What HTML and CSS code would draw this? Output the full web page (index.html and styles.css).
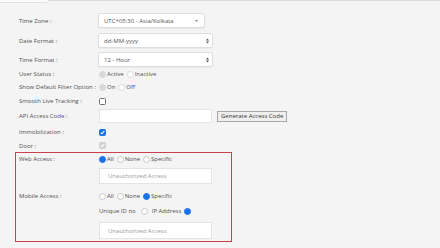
FILE: index.html
```html
<!DOCTYPE html>
<html>
<head>
<meta charset="utf-8">
<link rel="stylesheet" href="styles.css">
</head>
<body>
<div class="topbar"><div class="tab"></div><div class="line"></div></div>
<div class="form">
  <div class="row r-tz">
    <span class="lbl">Time Zone :</span>
    <div class="select tz"><span>UTC+05:30 - Asia/Kolkata</span><svg class="caret" width="3" height="2" viewBox="0 0 3 2"><path d="M0 0H3L1.5 2Z" fill="#888"/></svg></div>
  </div>
  <div class="row r-df">
    <span class="lbl">Date Format :</span>
    <div class="select wide"><span>dd-MM-yyyy</span><svg class="updown" width="3" height="6" viewBox="0 0 3 6"><path d="M0 2.4H3L1.5 0.4Z M0 3.6H3L1.5 5.6Z" fill="#555"/></svg></div>
  </div>
  <div class="row r-tf">
    <span class="lbl">Time Format :</span>
    <div class="select wide"><span>12 - Hour</span><svg class="updown" width="3" height="6" viewBox="0 0 3 6"><path d="M0 2.4H3L1.5 0.4Z M0 3.6H3L1.5 5.6Z" fill="#555"/></svg></div>
  </div>
  <div class="row r-us">
    <span class="lbl">User Status :</span>
    <span class="radio dis-on"></span><span class="opt">Active</span>
    <span class="radio dis"></span><span class="opt">Inactive</span>
  </div>
  <div class="row r-sd">
    <span class="lbl">Show Default Filter Option :</span>
    <span class="radio dis-on"></span><span class="opt">On</span>
    <span class="radio dis"></span><span class="opt">Off</span>
  </div>
  <div class="row r-sm">
    <span class="lbl">Smooth Live Tracking :</span>
    <span class="check"></span>
  </div>
  <div class="row r-api">
    <span class="lbl">API Access Code :</span>
    <div class="input api"></div>
    <button class="btn">Generate Access Code</button>
  </div>
  <div class="row r-im">
    <span class="lbl">Immobilization :</span>
    <span class="check on"><svg width="5" height="5" viewBox="0 0 5 5"><path d="M0.8 2.6L2 3.8L4.3 1" stroke="#fff" stroke-width="1.1" fill="none"/></svg></span>
  </div>
  <div class="row r-door">
    <span class="lbl">Door :</span>
    <span class="check dis-on"><svg width="5" height="5" viewBox="0 0 5 5"><path d="M0.8 2.6L2 3.8L4.3 1" stroke="#fff" stroke-width="1.1" fill="none"/></svg></span>
  </div>
  <div class="access">
    <div class="row r-web">
      <span class="lbl">Web Access :</span>
      <span class="radio on"></span><span class="opt">All</span>
      <span class="radio"></span><span class="opt">None</span>
      <span class="radio"></span><span class="opt">Specific</span>
    </div>
    <div class="input ua ua1">Unauthorized Access</div>
    <div class="row r-mob">
      <span class="lbl">Mobile Access :</span>
      <span class="radio"></span><span class="opt">All</span>
      <span class="radio"></span><span class="opt">None</span>
      <span class="radio on"></span><span class="opt">Specific</span>
    </div>
    <div class="row r-uid">
      <span class="lbl"></span>
      <span class="opt">Unique ID no</span><span class="radio gap"></span>
      <span class="opt">IP Address</span><span class="radio on"></span>
    </div>
    <div class="input ua ua2">Unauthorized Access</div>
  </div>
</div>
</body>
</html>
```
FILE: styles.css
```css
* { box-sizing: border-box; }
html, body { margin: 0; padding: 0; }
body {
  width: 440px;
  height: 248px;
  background: #f4f4f4;
  font-family: "Open Sans", "Noto Sans", sans-serif;
  font-size: 6px;
  color: #505050;
  line-height: 1;
  overflow: hidden;
}
.topbar { display: flex; height: 3px; }
.topbar .tab {
  width: 48px; height: 3px; background: #fafafa;
  border-bottom: 1px solid #e0e0e0;
  border-bottom-right-radius: 3px;
}
.topbar .line { flex: 1; border-top: 1px solid #dcdcdc; }
.form { padding-left: 19px; display: flex; flex-direction: column; }
.row { display: flex; align-items: center; }
.lbl { width: 80px; flex: none; white-space: nowrap; }
.select {
  margin-left: -1px;
  height: 15px;
  background: #fff;
  border: 1px solid #dedede;
  border-radius: 2px;
  box-shadow: 0 1px 1px rgba(0,0,0,0.04);
  display: flex; align-items: center; justify-content: space-between;
  padding: 1px 4px 0 5px;
  color: #555;
}
.select.tz { width: 107px; padding-right: 6px; }
.select.wide { width: 115px; padding-right: 3px; }
.r-tz { margin-top: 10px; height: 15px; }
.r-df { margin-top: 5px; height: 15px; }
.r-tf { margin-top: 4px; height: 15px; }
.r-us { margin-top: 1px; height: 12px; }
.r-sd { height: 14px; }
.r-sm { height: 14px; }
.r-api { margin-top: 1px; height: 14px; }
.r-im { margin-top: 2px; height: 14px; }
.r-door { height: 13px; }
.radio {
  width: 7px; height: 7px; border-radius: 50%;
  border: 1px solid #c8c8c8; background: #fff; flex: none;
  margin-right: 1px;
}
.radio.on { background: #1a73e8; border-color: #1a73e8; }
.radio.dis-on { background: #d8d8d8; border-color: #d8d8d8; }
.radio.dis { border-color: #dadada; }
.radio.gap { margin-left: 2px; margin-right: 4px; }
.opt { margin-right: 3px; white-space: nowrap; }
.check {
  width: 7px; height: 7px; border-radius: 1.5px;
  border: 1px solid #707070; background: #fff;
  display: flex; align-items: center; justify-content: center;
}
.check.on { background: #1a73e8; border-color: #1a73e8; }
.check.dis-on { background: #d0d0d0; border-color: #d0d0d0; }
.input {
  background: #fff;
  border: 1px solid #e4e4e4;
}
.input.api { width: 113px; height: 14px; }
.btn {
  margin-left: 5px;
  height: 11px;
  padding: 0 3px;
  font-family: inherit;
  font-size: 6px;
  color: #333;
  background: #efefef;
  border: 1px solid #a8a8a8;
  border-radius: 0;
  line-height: 1;
}
.access {
  margin-left: -4px;
  width: 217px;
  border: 1px solid #c8414b;
  padding: 0 0 2px 3px;
  display: flex; flex-direction: column;
}
.r-web { height: 12px; }
.ua {
  margin-left: 80px;
  width: 113px;
  color: #999;
  padding-left: 8px;
  display: flex; align-items: center;
}
.ua1 { margin-top: 3px; height: 16px; }
.r-mob { margin-top: 6px; height: 12px; }
.r-uid { margin-top: 3px; height: 12px; }
.ua2 { margin-top: 5px; height: 17px; }
```
